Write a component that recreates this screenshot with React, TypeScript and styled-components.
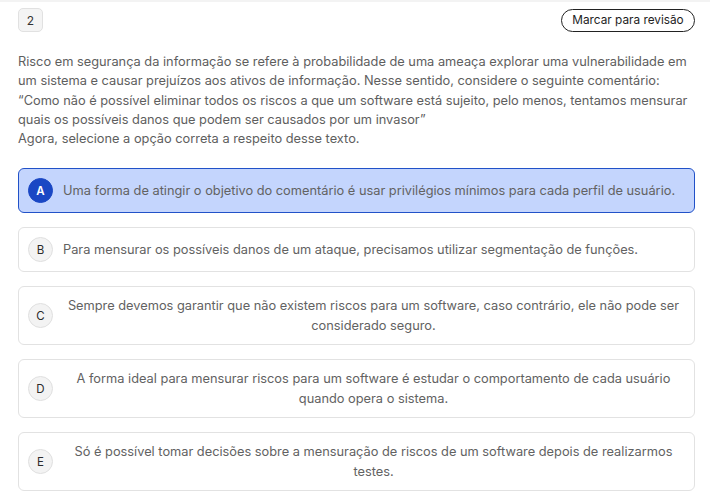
import React from "react";
import styled, { createGlobalStyle } from "styled-components";

const Global = createGlobalStyle`
  html, body { margin: 0; padding: 0; background: #ffffff; }
  body { font-family: Inter, "Noto Sans", Arial, sans-serif; -webkit-font-smoothing: antialiased; }
`;

const Page = styled.div`
  width: 710px;
  min-height: 503px;
  box-sizing: border-box;
  border-top: 2px solid #f3f3f3;
  padding: 6px 15px 0 18px;
  display: flex;
  flex-direction: column;
`;

const Header = styled.div`
  display: flex;
  align-items: center;
  justify-content: space-between;
  height: 24px;
`;

const NumberBadge = styled.div`
  width: 25px;
  height: 24px;
  box-sizing: border-box;
  border: 1px solid #e1e1e1;
  border-radius: 5px;
  background: #f4f4f4;
  color: #333;
  font-size: 12px;
  display: flex;
  align-items: center;
  justify-content: center;
`;

const ReviewButton = styled.button`
  height: 23px;
  width: 134px;
  box-sizing: border-box;
  border: 1px solid #222;
  border-radius: 12px;
  background: #fff;
  color: #1e1e1e;
  font-family: Inter, "Noto Sans", Arial, sans-serif;
  font-size: 11.8px;
  padding: 0;
  cursor: pointer;
`;

const Statement = styled.div`
  margin-top: 20px;
  color: #5e5e5e;
  font-size: 12.8px;
  line-height: 19.3px;
`;

const Options = styled.div`
  margin-top: 20px;
  display: flex;
  flex-direction: column;
  gap: 14px;
`;

const Card = styled.div<{ $selected?: boolean }>`
  display: flex;
  align-items: center;
  gap: 10px;
  box-sizing: border-box;
  min-height: 45px;
  padding: 9px 10px 9px 9px;
  border-radius: 6px;
  border: 1px solid ${(p) => (p.$selected ? "#2151c8" : "#e2e2e2")};
  background: ${(p) => (p.$selected ? "#c4d5fd" : "#ffffff")};
`;

const Letter = styled.div<{ $selected?: boolean }>`
  flex: 0 0 auto;
  width: 25px;
  height: 25px;
  box-sizing: border-box;
  border-radius: 50%;
  border: 1px solid ${(p) => (p.$selected ? "#1a47c4" : "#e0e0e0")};
  background: ${(p) => (p.$selected ? "#1a47c4" : "#f3f3f3")};
  color: ${(p) => (p.$selected ? "#ffffff" : "#2a2a2a")};
  font-size: 11.5px;
  font-weight: ${(p) => (p.$selected ? 600 : 400)};
  display: flex;
  align-items: center;
  justify-content: center;
`;

const OptionText = styled.div`
  flex: 0 1 auto;
  text-align: center;
  color: #626262;
  font-size: 12.8px;
  line-height: 19.5px;
`;

const options = [
  { l: "A", t: "Uma forma de atingir o objetivo do comentário é usar privilégios mínimos para cada perfil de usuário.", s: true },
  { l: "B", t: "Para mensurar os possíveis danos de um ataque, precisamos utilizar segmentação de funções." },
  { l: "C", t: "Sempre devemos garantir que não existem riscos para um software, caso contrário, ele não pode ser considerado seguro." },
  { l: "D", t: "A forma ideal para mensurar riscos para um software é estudar o comportamento de cada usuário quando opera o sistema." },
  { l: "E", t: "Só é possível tomar decisões sobre a mensuração de riscos de um software depois de realizarmos testes." },
];

export default function App() {
  return (
    <>
      <Global />
      <Page>
        <Header>
          <NumberBadge>2</NumberBadge>
          <ReviewButton>Marcar para revisão</ReviewButton>
        </Header>
        <Statement>
          Risco em segurança da informação se refere à probabilidade de uma ameaça explorar uma vulnerabilidade em
          um sistema e causar prejuízos aos ativos de informação. Nesse sentido, considere o seguinte comentário:
          <br />
          “Como não é possível eliminar todos os riscos a que um software está sujeito, pelo menos, tentamos mensurar
          quais os possíveis danos que podem ser causados por um invasor”
          <br />
          Agora, selecione a opção correta a respeito desse texto.
        </Statement>
        <Options>
          {options.map((o) => (
            <Card key={o.l} $selected={o.s}>
              <Letter $selected={o.s}>{o.l}</Letter>
              <OptionText>{o.t}</OptionText>
            </Card>
          ))}
        </Options>
      </Page>
    </>
  );
}
